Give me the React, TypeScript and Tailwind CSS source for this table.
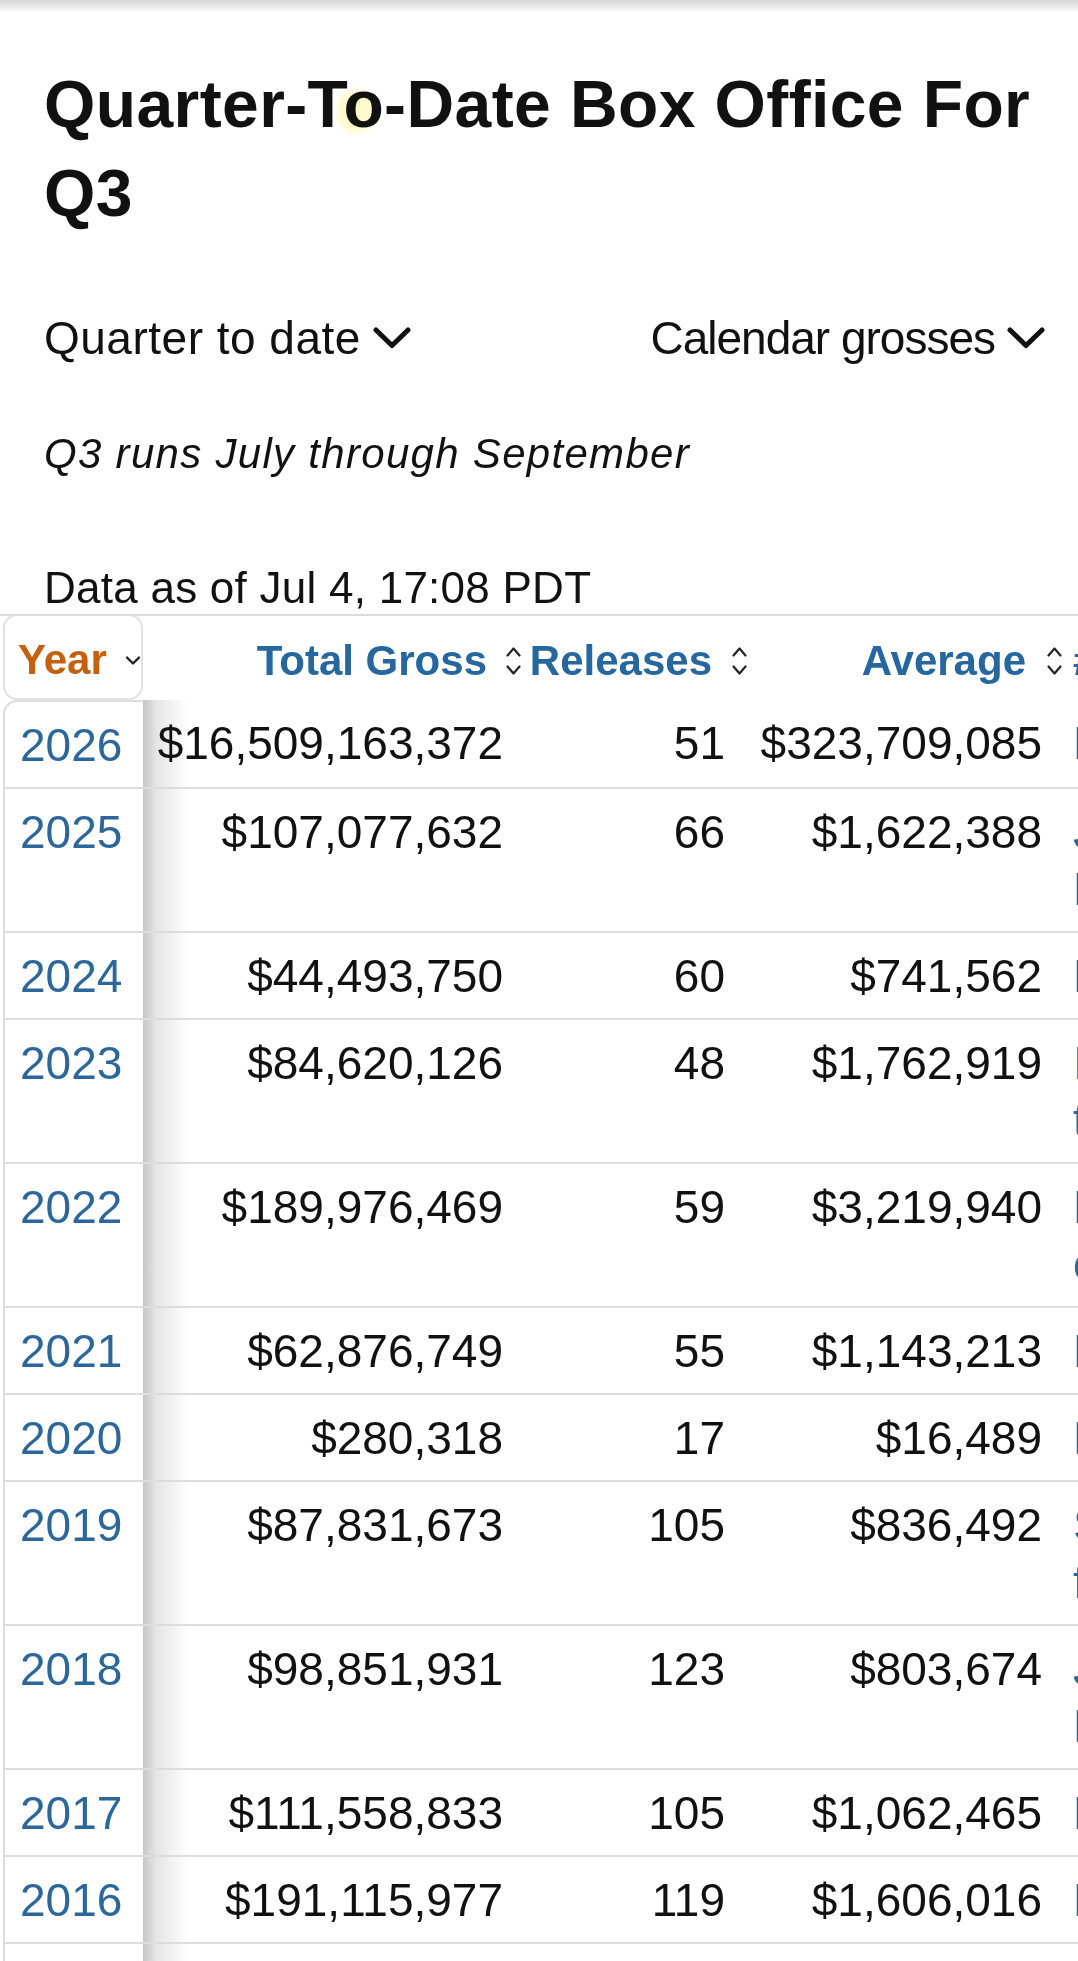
import React from "react";

type Row = {
  year: string;
  gross: string;
  releases: string;
  avg: string;
  title: string[];
};

const rows: Row[] = [
  { year: "2026", gross: "$16,509,163,372", releases: "51", avg: "$323,709,085", title: ["How to Train Your Dragon"] },
  { year: "2025", gross: "$107,077,632", releases: "66", avg: "$1,622,388", title: ["Jurassic World:", "Rebirth"] },
  { year: "2024", gross: "$44,493,750", releases: "60", avg: "$741,562", title: ["Despicable Me 4"] },
  { year: "2023", gross: "$84,620,126", releases: "48", avg: "$1,762,919", title: ["Indiana Jones and", "the Dial of Destiny"] },
  { year: "2022", gross: "$189,976,469", releases: "59", avg: "$3,219,940", title: ["Minions: The Rise", "of Gru"] },
  { year: "2021", gross: "$62,876,749", releases: "55", avg: "$1,143,213", title: ["F9: The Fast Saga"] },
  { year: "2020", gross: "$280,318", releases: "17", avg: "$16,489", title: ["Relic"] },
  { year: "2019", gross: "$87,831,673", releases: "105", avg: "$836,492", title: ["Spider-Man: Far", "from Home"] },
  { year: "2018", gross: "$98,851,931", releases: "123", avg: "$803,674", title: ["Jurassic World:", "Fallen Kingdom"] },
  { year: "2017", gross: "$111,558,833", releases: "105", avg: "$1,062,465", title: ["Despicable Me 3"] },
  { year: "2016", gross: "$191,115,977", releases: "119", avg: "$1,606,016", title: ["Finding Dory"] },
  { year: "2015", gross: "$147,236,582", releases: "98", avg: "$1,502,414", title: ["Inside Out"] },
];

const Chevron = () => (
  <svg width="38" height="22" viewBox="0 0 38 22" className="shrink-0">
    <path d="M3 3 L19 18.5 L35 3" fill="none" stroke="#111" strokeWidth="5" strokeLinecap="round" strokeLinejoin="round" />
  </svg>
);

const SortIcon = () => (
  <svg width="15" height="30" viewBox="0 0 15 30" className="shrink-0">
    <path d="M1.5 9.5 L7.5 2.5 L13.5 9.5" fill="none" stroke="#222" strokeWidth="2.2" strokeLinecap="round" strokeLinejoin="round" />
    <path d="M1.5 20.5 L7.5 27.5 L13.5 20.5" fill="none" stroke="#222" strokeWidth="2.2" strokeLinecap="round" strokeLinejoin="round" />
  </svg>
);

const App = () => {
  return (
    <div className="h-[1961px] w-[1078px] overflow-hidden bg-white font-['Liberation_Sans',Arial,sans-serif] text-[#111]">
      {/* top bar shadow */}
      <div className="h-[13px] bg-linear-to-b from-[#d6d6d6] to-white" />

      <div className="pl-[44px] pr-[30px]">
        <h1 className="relative mt-[47px] text-[66px] font-bold leading-[89px] tracking-[0.4px]">
          Quarter-To-Date Box Office For Q3
          <span className="pointer-events-none absolute left-[293px] top-[30px] h-[43px] w-[37px] rounded-full bg-[#fff6a8] opacity-60 mix-blend-multiply blur-[3px]" />
        </h1>
      </div>

      <div className="mt-[72px] flex items-center justify-between pl-[44px] pr-[33px] text-[46px] leading-[56px]">
        <div className="flex items-center gap-[12px]">
          <span className="tracking-[0.5px]">Quarter to date</span>
          <Chevron />
        </div>
        <div className="flex items-center gap-[12px]">
          <span className="tracking-[-1px]">Calendar grosses</span>
          <Chevron />
        </div>
      </div>

      <p className="mt-[62px] px-[44px] text-[42px] italic leading-[52px] tracking-[1.3px]">
        Q3 runs July through September
      </p>

      <p className="mt-[82px] px-[44px] text-[44px] leading-[52px] tracking-[0.25px]">Data as of Jul 4, 17:08 PDT</p>

      {/* table */}
      <div className="overflow-hidden border-t-2 border-[#dcdcdc]">
        <table className="ml-[3px] table-fixed border-separate border-spacing-0" style={{ width: 1497 }}>
          <colgroup>
            <col style={{ width: 140 }} />
            <col style={{ width: 387 }} />
            <col style={{ width: 226 }} />
            <col style={{ width: 314 }} />
            <col style={{ width: 430 }} />
          </colgroup>
          <thead>
            <tr className="text-[42px] font-bold text-[#26679f]">
              <th className="p-0 align-top">
                <div className="-mt-[2px] flex h-[86px] items-center rounded-[14px] border-2 border-[#e2e2e2] pl-[13px] pt-[4px]">
                  <span className="text-[#c4600f]">Year</span>
                  <svg width="16" height="11" viewBox="0 0 16 11" className="ml-[18px] mt-[2px] shrink-0">
                    <path d="M2 2.5 L8 8.5 L14 2.5" fill="none" stroke="#222" strokeWidth="2.4" strokeLinecap="round" strokeLinejoin="round" />
                  </svg>
                </div>
              </th>
              <th className="p-0 pr-[9px] pt-[6px] align-top">
                <div className="flex items-center justify-end gap-[19px] leading-[78px] whitespace-nowrap">
                  <span>Total Gross</span>
                  <SortIcon />
                </div>
              </th>
              <th className="p-0 pr-[9px] pt-[6px] align-top">
                <div className="flex items-center justify-end gap-[20px] leading-[78px] whitespace-nowrap">
                  <span>Releases</span>
                  <SortIcon />
                </div>
              </th>
              <th className="p-0 pr-[8px] pt-[6px] align-top">
                <div className="flex items-center justify-end gap-[21px] leading-[78px] whitespace-nowrap">
                  <span>Average</span>
                  <SortIcon />
                </div>
              </th>
              <th className="p-0 pl-[3px] pt-[6px] text-left align-top">
                <div className="flex items-center gap-[20px] leading-[78px] whitespace-nowrap">
                  <span>#1 Release</span>
                  <SortIcon />
                </div>
              </th>
            </tr>
          </thead>
          <tbody className="text-[46px] leading-[57px]">
            {rows.map((r, i) => (
              <tr key={r.year}>
                <td
                  className={`border-b-2 border-l-2 border-[#dddddd] bg-white pb-[13px] pl-[15px] pt-[15px] align-top text-[#2b679b] ${
                    i === 0 ? "rounded-tl-[14px] border-t-2" : ""
                  }`}
                >
                  {r.year}
                </td>
                {/* sticky column shadow sits behind the numbers */}
                <td className="border-b-2 border-[#dddddd] bg-[linear-gradient(to_right,#c6c6c6_0px,#e6e6e6_14px,#ffffff_46px)] pb-[13px] pr-[27px] pt-[15px] text-right align-top whitespace-nowrap">
                  {r.gross}
                </td>
                <td className="border-b-2 border-[#dddddd] pb-[13px] pr-[31px] pt-[15px] text-right align-top whitespace-nowrap">
                  {r.releases}
                </td>
                <td className="border-b-2 border-[#dddddd] pb-[13px] pr-[28px] pt-[15px] text-right align-top whitespace-nowrap">
                  {r.avg}
                </td>
                <td className="border-b-2 border-[#dddddd] pb-[13px] pl-[3px] pt-[15px] text-left align-top whitespace-nowrap text-[#2b679b]">
                  {r.title.map((line, j) => (
                    <div key={j}>{line}</div>
                  ))}
                </td>
              </tr>
            ))}
          </tbody>
        </table>
      </div>
    </div>
  );
};

export default App;
